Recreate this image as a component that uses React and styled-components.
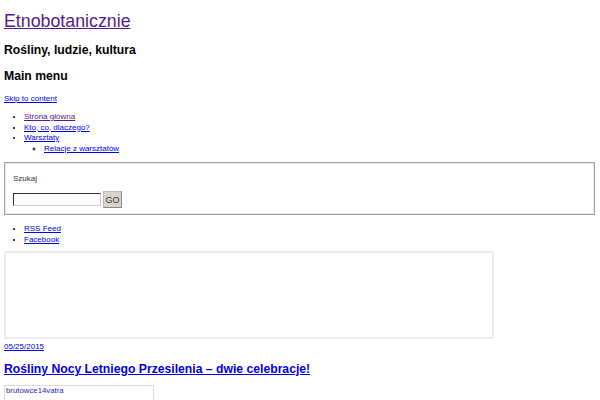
import React from "react";
import styled, { createGlobalStyle } from "styled-components";

const Global = createGlobalStyle`
  html, body { margin: 0; padding: 0; background: #fff; }
  body { font-family: "Liberation Sans", Arial, sans-serif; color: #000; }
  a { color: #0000ee; }
`;

const Page = styled.div`
  padding: 11px 4px 0 4px;
  display: flex;
  flex-direction: column;
  align-items: flex-start;
`;

const SiteTitle = styled.a`
  font-size: 17.8px;
  line-height: 20px;
  color: #551a8b;
`;

const Heading = styled.h2`
  margin: ${(p) => p.$mt}px 0 0 0;
  font-size: 12.2px;
  line-height: 16px;
  font-weight: bold;
`;

const SmallLink = styled.a`
  margin-top: ${(p) => p.$mt}px;
  font-size: 8px;
  line-height: 11px;
  color: ${(p) => (p.$visited ? "#551a8b" : "#0000ee")};
`;

const List = styled.ul`
  margin: ${(p) => p.$mt}px 0 0 0;
  padding-left: ${(p) => p.$pl}px;
  font-size: 8px;
  line-height: 10.5px;
  list-style-type: ${(p) => p.$type || "disc"};
`;

const Item = styled.li`
  a { color: ${(p) => (p.$visited ? "#551a8b" : "#0000ee")}; }
`;

const SearchBox = styled.fieldset`
  box-sizing: border-box;
  align-self: stretch;
  margin: 8px 1px 0 0;
  padding: 10px 7px 6px 7px;
  border: 1px solid #a0a0a0;
  box-shadow: inset 0 0 0 1px #ececec;
  display: flex;
  flex-direction: column;
  gap: 7px;
`;

const Label = styled.label`
  font-size: 8px;
  line-height: 11px;
  color: #333;
  padding-left: 1px;
`;

const SearchRow = styled.div`
  display: flex;
  align-items: center;
  gap: 2px;
  padding-left: 1px;
`;

const Input = styled.input`
  box-sizing: border-box;
  width: 88px;
  height: 13px;
  border: 1px solid #333;
  border-right-color: #ccc;
  border-bottom-color: #ccc;
  padding: 0;
  margin: 0;
`;

const Button = styled.button`
  box-sizing: border-box;
  width: 19px;
  height: 17px;
  padding: 0;
  margin: 0;
  font-family: "Liberation Sans", Arial, sans-serif;
  font-size: 9px;
  color: #333;
  background: #d8d4cc;
  border: 1px solid #bbb;
  border-right-color: #888;
  border-bottom-color: #888;
`;

const Frame = styled.div`
  box-sizing: border-box;
  width: 490px;
  height: 88px;
  margin-top: 6px;
  border: 2px solid #ececec;
  border-radius: 2px;
`;

const PostTitle = styled.a`
  margin-top: 9px;
  font-size: 12.2px;
  line-height: 16px;
  font-weight: bold;
  color: #0000ee;
`;

const Caption = styled.div`
  box-sizing: border-box;
  margin-top: 8px;
  width: 150px;
  height: 20px;
  border: 1px solid #dcdcdc;
  border-bottom: none;
  padding: 0 1px;
  font-size: 7.8px;
  line-height: 10px;
  color: #2a2ab0;
`;

export default function App() {
  return (
    <>
      <Global />
      <Page>
        <SiteTitle href="#">Etnobotanicznie</SiteTitle>
        <Heading $mt={11}>Rośliny, ludzie, kultura</Heading>
        <Heading $mt={10}>Main menu</Heading>
        <SmallLink href="#" $mt={9}>Skip to content</SmallLink>
        <List $mt={8} $pl={20}>
          <Item $visited><a href="#">Strona główna</a></Item>
          <Item><a href="#">Kto, co, dlaczego?</a></Item>
          <Item>
            <a href="#">Warsztaty</a>
            <List $mt={0} $pl={20} $type="circle">
              <Item><a href="#">Relacje z warsztatów</a></Item>
            </List>
          </Item>
        </List>
        <SearchBox>
          <Label>Szukaj</Label>
          <SearchRow>
            <Input type="text" />
            <Button>GO</Button>
          </SearchRow>
        </SearchBox>
        <List $mt={9} $pl={20}>
          <Item><a href="#">RSS Feed</a></Item>
          <Item><a href="#">Facebook</a></Item>
        </List>
        <Frame />
        <SmallLink href="#" $mt={2}>05/25/2015</SmallLink>
        <PostTitle href="#">Rośliny Nocy Letniego Przesilenia – dwie celebracje!</PostTitle>
        <Caption>brutowce14vatra</Caption>
      </Page>
    </>
  );
}
